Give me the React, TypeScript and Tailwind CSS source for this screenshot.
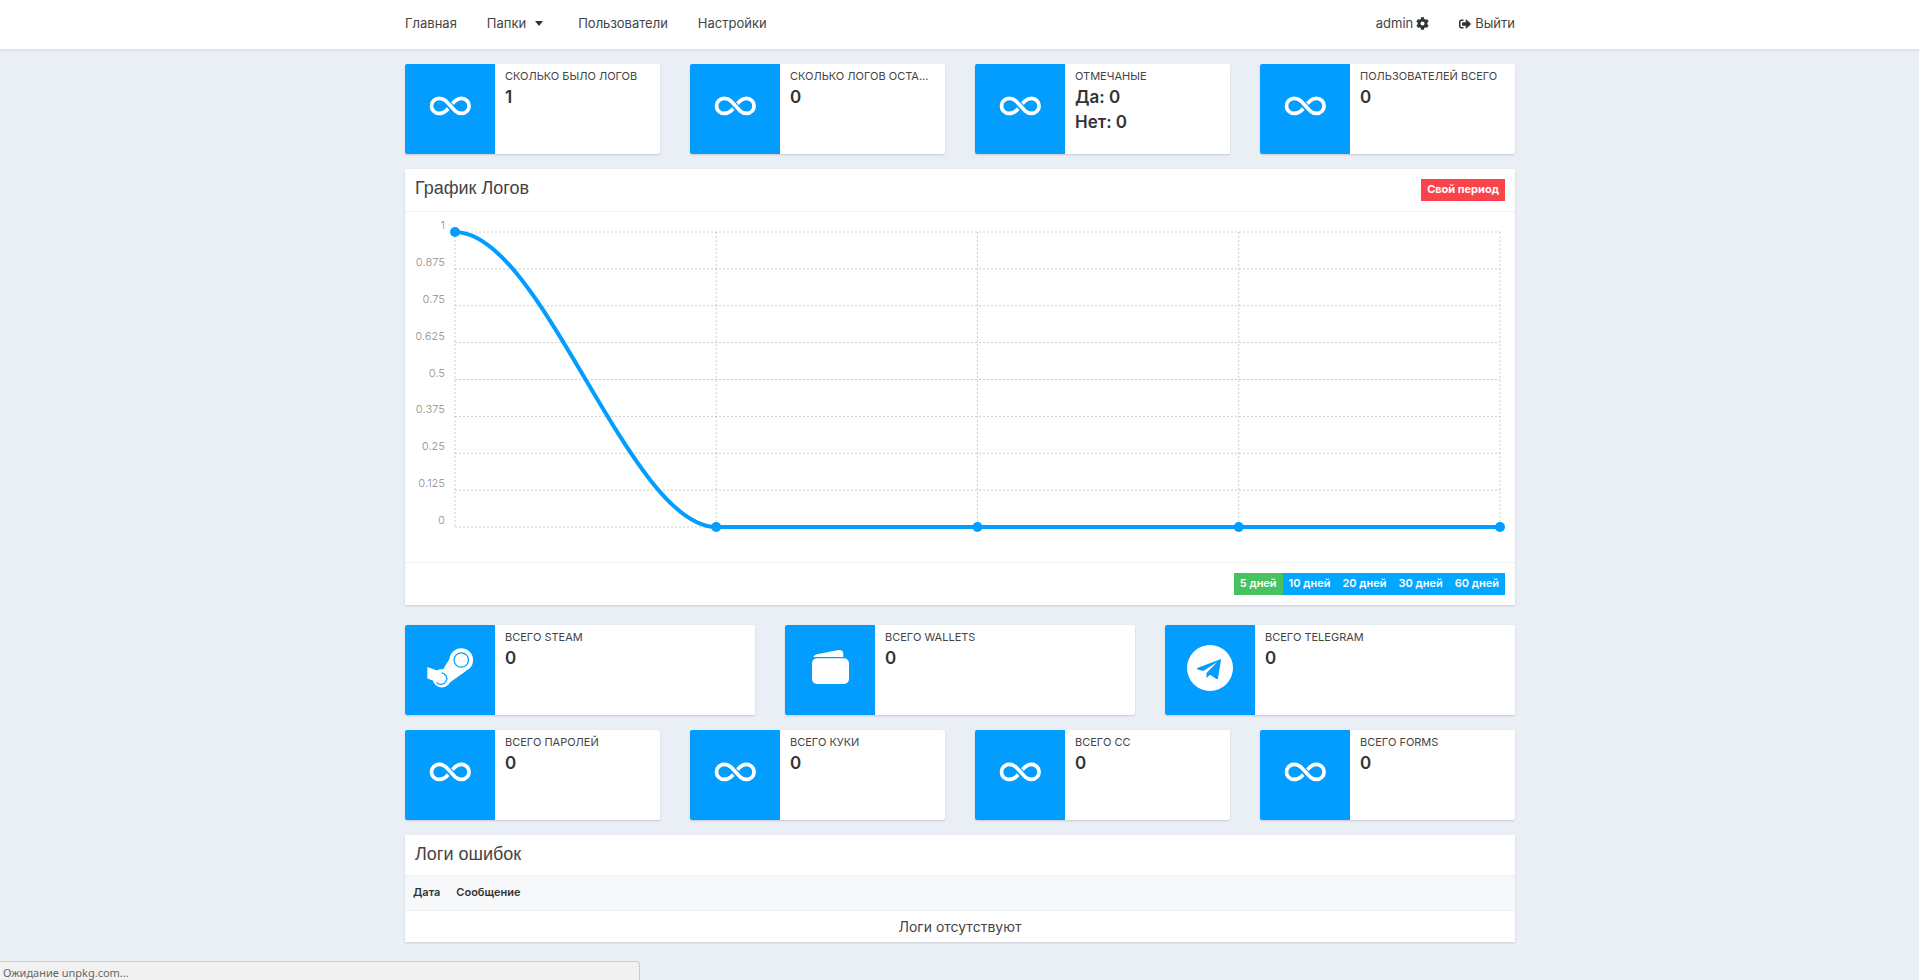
import type { ReactNode } from 'react';
import { FaCog, FaSignOutAlt } from 'react-icons/fa';

interface Stat {
  label: string;
  values: string[];
  icon: ReactNode;
}

function InfinityIcon() {
  return (
    <svg className="w-[60px] h-[60px]" viewBox="0 0 60 60" fill="none" stroke="currentColor" strokeWidth={3.7}>
      <path d="M28.2 29.6 L26 31.8 C24 33.6 21.8 34.4 19 34.4 A7.5 7.5 0 0 1 19 19.4 C21.8 19.4 24 20.3 26 22 L35 31.8 C37 33.6 39 34.4 41.6 34.4 A7.5 7.5 0 0 0 41.6 19.4 C39 19.4 37 20.2 35 22 L32.4 24.6" />
    </svg>
  );
}

function SteamIcon() {
  return (
    <svg className="w-[60px] h-[60px]" viewBox="0 0 60 60" fill="currentColor">
      <path d="M7.3 27 L18.5 31 L23 29.5 L30 18 H43 L46 31 L30.5 42 L21 46.5 L13 40.5 L7.3 38.6 Z" />
      <circle cx="41.3" cy="20" r="11.8" />
      <circle cx="21.8" cy="38.2" r="9.2" />
      <circle cx="41.3" cy="20" r="7.2" fill="none" stroke="#029dfe" strokeWidth={1.3} />
      <path d="M21.5 32.8 A5.8 5.8 0 1 1 16.5 42.3" fill="none" stroke="#029dfe" strokeWidth={1.3} />
    </svg>
  );
}

function WalletIcon() {
  return (
    <svg className="w-[60px] h-[60px]" viewBox="0 0 60 60" fill="currentColor">
      <path d="M13.3 17 C14 15.4 15.2 14.6 17 14.2 L38.5 10 C41.5 9.5 43.2 11 43.3 14 V17 Z" />
      <rect x="12" y="18.3" width="37" height="25.7" rx="5" />
    </svg>
  );
}

function TelegramIcon() {
  return (
    <svg className="w-[60px] h-[60px]" viewBox="0 0 60 60" fill="currentColor">
      <circle cx="30" cy="28" r="23" />
      <path fill="#029dfe" d="M41.2 19 L17.2 28 C16.6 28.6 17 29.2 17.8 29.4 L23.4 31 L37.5 21.8 L26.5 33 L26.4 38 L30 34.8 L36.4 39 C37.2 39.4 37.8 39 38 38.2 Z" />
    </svg>
  );
}

const summary: Stat[] = [
  { label: 'Сколько было логов', values: ['1'], icon: <InfinityIcon /> },
  { label: 'Сколько логов оста...', values: ['0'], icon: <InfinityIcon /> },
  { label: 'Отмечаные', values: ['Да: 0', 'Нет: 0'], icon: <InfinityIcon /> },
  { label: 'Пользователей всего', values: ['0'], icon: <InfinityIcon /> },
];

const services: Stat[] = [
  { label: 'Всего Steam', values: ['0'], icon: <SteamIcon /> },
  { label: 'Всего Wallets', values: ['0'], icon: <WalletIcon /> },
  { label: 'Всего Telegram', values: ['0'], icon: <TelegramIcon /> },
];

const totals: Stat[] = [
  { label: 'Всего паролей', values: ['0'], icon: <InfinityIcon /> },
  { label: 'Всего куки', values: ['0'], icon: <InfinityIcon /> },
  { label: 'Всего CC', values: ['0'], icon: <InfinityIcon /> },
  { label: 'Всего forms', values: ['0'], icon: <InfinityIcon /> },
];

const periods = ['5 дней', '10 дней', '20 дней', '30 дней', '60 дней'];

function StatCard({ label, values, icon }: Stat) {
  return (
    <div className="flex h-[90px] bg-white rounded-xs overflow-hidden shadow-[0_1px_2px_rgba(0,0,0,0.15)]">
      <div className="w-[90px] shrink-0 bg-[#029dfe] text-white flex items-center justify-center">{icon}</div>
      <div className="min-w-0 flex-1 pl-2.5 pt-1">
        <p className="mb-px text-[11px] leading-4 uppercase whitespace-nowrap text-[#444]">{label}</p>
        {values.map((value) => (
          <p key={value} className="text-[17px] leading-[25px] font-semibold text-[#333]">{value}</p>
        ))}
      </div>
    </div>
  );
}

const points = [1, 0, 0, 0, 0];
const ticks = [1, 0.875, 0.75, 0.625, 0.5, 0.375, 0.25, 0.125, 0];
const LEFT = 50;
const TOP = 20;
const STEP = 261.25;
const HEIGHT = 295;

const px = (i: number) => LEFT + i * STEP;
const py = (value: number) => TOP + (1 - value) * HEIGHT;

function LogsChart() {
  // flat tangents at every point
  const line = points
    .map((p, i) =>
      i === 0
        ? `M${px(0)} ${py(p)}`
        : `C${px(i - 1) + STEP / 3} ${py(points[i - 1])} ${px(i) - STEP / 3} ${py(p)} ${px(i)} ${py(p)}`
    )
    .join(' ');

  return (
    <svg className="block w-full" viewBox="0 0 1110 350">
      <g stroke="rgba(0,0,0,0.2)" strokeDasharray="2 2">
        {points.map((_, i) => (
          <line key={i} x1={px(i)} x2={px(i)} y1={py(1)} y2={py(0)} />
        ))}
        {ticks.map((t) => (
          <line key={t} x1={px(0)} x2={px(4)} y1={py(t)} y2={py(t)} />
        ))}
      </g>
      <g fill="rgba(0,0,0,0.4)" fontSize={11} textAnchor="end">
        {ticks.map((t) => (
          <text key={t} x={40} y={py(t) - 3}>{t}</text>
        ))}
      </g>
      <path d={line} fill="none" stroke="#029dfe" strokeWidth={4} />
      {points.map((p, i) => (
        <circle key={i} cx={px(i)} cy={py(p)} r={5} fill="#029dfe" />
      ))}
    </svg>
  );
}

export default function App() {
  return (
    <div className="min-h-screen bg-[#eaeef5] text-[#333] text-[13px] font-['Inter','Liberation_Sans',sans-serif]">
      <header className="bg-white border-b border-[#dfe1e5] shadow-[0_1px_2px_rgba(0,0,0,0.06)]">
        <nav className="max-w-[1111px] mx-auto pl-px h-[49px] flex items-center justify-between pb-0.5 text-[#444]">
          <div className="flex items-center gap-[30px]">
            <a href="#">Главная</a>
            <button className="flex items-center gap-2 pr-1">
              Папки
              <svg className="w-2.5 h-[5px]" viewBox="0 0 8 5" fill="#333">
                <path d="M0 0 H8 L4 5 Z" />
              </svg>
            </button>
            <a href="#">Пользователи</a>
            <a href="#">Настройки</a>
          </div>
          <div className="flex items-center gap-[30px]">
            <a href="#" className="flex items-center gap-[3px]">
              admin
              <FaCog className="w-[13px] h-[13px] text-[#333]" />
            </a>
            <a href="#" className="flex items-center gap-1">
              <FaSignOutAlt className="w-3 h-3 text-[#333]" />
              Выйти
            </a>
          </div>
        </nav>
      </header>

      <main className="max-w-[1111px] mx-auto pl-px pt-3.5 pb-9">
        <section className="grid grid-cols-4 gap-[30px]">
          {summary.map((stat) => <StatCard key={stat.label} {...stat} />)}
        </section>

        {/* Chart */}
        <section className="mt-[15px] bg-white shadow-[0_1px_2px_rgba(0,0,0,0.15)]">
          <div className="flex items-center justify-between h-[43px] px-2.5 border-b border-[#f0f1f3]">
            <h2 className="text-[18px] leading-6 pb-1 text-[#444] font-['Liberation_Sans',sans-serif]">График Логов</h2>
            <button className="h-[22px] px-1.5 pb-0.5 bg-[#fc424a] text-white text-[11px] font-bold">Свой период</button>
          </div>
          <LogsChart />
          <div className="flex justify-end p-2.5 border-t border-[#f0f1f3]">
            {periods.map((period, i) => (
              <button
                key={period}
                className={`h-[22px] px-1.5 pb-0.5 text-white text-[11px] font-semibold ${i === 0 ? 'bg-[#46c35f]' : 'bg-[#02a8ff]'}`}
              >
                {period}
              </button>
            ))}
          </div>
        </section>

        <section className="mt-5 grid grid-cols-3 gap-[30px]">
          {services.map((stat) => <StatCard key={stat.label} {...stat} />)}
        </section>

        <section className="mt-[15px] grid grid-cols-4 gap-[30px]">
          {totals.map((stat) => <StatCard key={stat.label} {...stat} />)}
        </section>

        {/* Errors */}
        <section className="mt-[15px] bg-white shadow-[0_1px_2px_rgba(0,0,0,0.15)]">
          <h2 className="h-10 px-2.5 text-[18px] leading-[38px] text-[#444] font-['Liberation_Sans',sans-serif]">Логи ошибок</h2>
          <table className="w-full">
            <thead>
              <tr className="h-[35px] bg-[#f6f8fa] border-y border-[#f0f1f3] text-[11px] text-left">
                <th className="w-px px-2 pb-0.5 font-semibold">Дата</th>
                <th className="px-2 pb-0.5 font-semibold">Сообщение</th>
              </tr>
            </thead>
            <tbody>
              <tr className="h-[31px]">
                <td colSpan={2} className="text-center text-[14px] text-[#444]">Логи отсутствуют</td>
              </tr>
            </tbody>
          </table>
        </section>
      </main>

      <div className="fixed bottom-0 left-0 w-1/3 h-[19px] pl-[3px] bg-[#f1f1f1] border-t border-r border-[#c9ccd2] rounded-tr-sm text-[11px] leading-[22px] text-[#666] font-['Noto_Sans',sans-serif]">
        Ожидание unpkg.com...
      </div>
    </div>
  );
}
